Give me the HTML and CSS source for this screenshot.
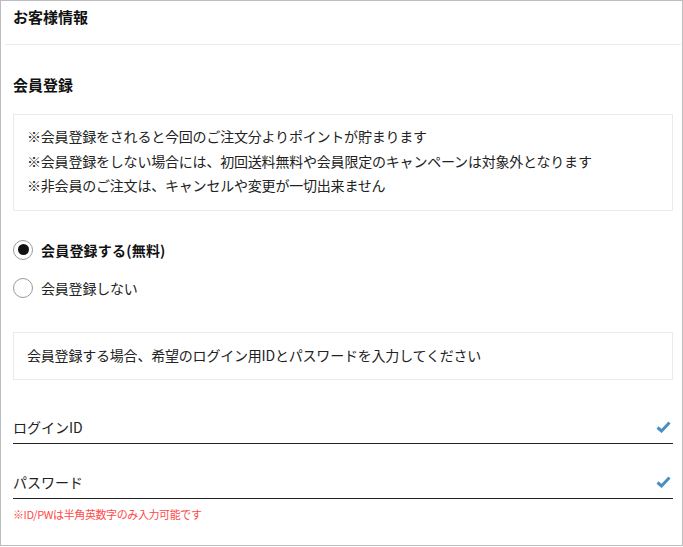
FILE: index.html
```html
<!DOCTYPE html>
<html lang="ja">
<head>
    <meta charset="utf-8">
    <meta name="viewport" content="width=device-width, initial-scale=1">
    <title>お客様情報</title>
    <link rel="stylesheet" href="styles.css">
</head>
<body>
    <div class="panel">
        <div class="panel-header">
            <h1>お客様情報</h1>
        </div>

        <div class="panel-body">
            <h2>会員登録</h2>

            <div class="note-box">
                <p>※会員登録をされると今回のご注文分よりポイントが貯まります</p>
                <p>※会員登録をしない場合には、初回送料無料や会員限定のキャンペーンは対象外となります</p>
                <p>※非会員のご注文は、キャンセルや変更が一切出来ません</p>
            </div>

            <div class="radio-group">
                <label class="radio checked">
                    <span class="radio-mark"></span>
                    <span class="radio-label">会員登録する(無料)</span>
                </label>
                <label class="radio">
                    <span class="radio-mark"></span>
                    <span class="radio-label">会員登録しない</span>
                </label>
            </div>

            <div class="note-box single">
                <p>会員登録する場合、希望のログイン用IDとパスワードを入力してください</p>
            </div>

            <div class="field login">
                <span class="field-label">ログインID</span>
                <svg class="check" width="15" height="12" viewBox="0 0 15 12">
                    <path d="M1.5 6.5 L5.5 10 L13.5 1.5" fill="none" stroke="#4a8fc0" stroke-width="3"/>
                </svg>
            </div>

            <div class="field password">
                <span class="field-label">パスワード</span>
                <svg class="check" width="15" height="12" viewBox="0 0 15 12">
                    <path d="M1.5 6.5 L5.5 10 L13.5 1.5" fill="none" stroke="#4a8fc0" stroke-width="3"/>
                </svg>
            </div>
            <p class="field-note">※ID/PWは半角英数字のみ入力可能です</p>
        </div>
    </div>
</body>
</html>
```

FILE: styles.css
```css
body {
    margin: 0;
    font-family: "Noto Sans CJK JP", "Noto Sans", sans-serif;
    color: #222;
    background: #fff;
}
.panel {
    width: 683px;
    height: 546px;
    box-sizing: border-box;
    border: 1px solid #bdbdbd;
}
.panel-header {
    height: 43px;
    margin: 0 1px 0 4px;
    padding-left: 8px;
    border-bottom: 1px solid #ebebeb;
}
.panel-header h1 {
    margin: 0;
    padding-top: 6px;
    font-size: 15px;
    line-height: 20px;
    font-weight: bold;
    color: #111;
}
.panel-body {
    padding: 0 9px 0 12px;
}
.panel-body h2 {
    margin: 30px 0 19px;
    font-size: 15px;
    line-height: 20px;
    font-weight: bold;
    color: #111;
}
.note-box {
    border: 1px solid #ebebeb;
    padding: 9px 13px 12px;
}
.note-box p {
    margin: 0;
    font-size: 14px;
    line-height: 24.5px;
    letter-spacing: -0.2px;
}
.note-box.single {
    margin-top: 25px;
    padding: 10px 13px 12px;
}
.note-box.single p {
    line-height: 24px;
}
.radio-group {
    margin-top: 20px;
}
.radio {
    display: flex;
    align-items: center;
    height: 38px;
    line-height: 20px;
}
.radio-mark {
    flex: none;
    width: 18px;
    height: 18px;
    border: 1.5px solid #9a9a9a;
    border-radius: 50%;
    display: flex;
    align-items: center;
    justify-content: center;
    margin-right: 8px;
}
.radio.checked .radio-mark::after {
    content: '';
    width: 11px;
    height: 11px;
    border-radius: 50%;
    background: #111;
}
.radio-label {
    font-size: 14px;
    letter-spacing: -0.2px;
}
.radio.checked .radio-label {
    font-weight: bold;
    letter-spacing: 0.2px;
    color: #111;
}
.field {
    display: flex;
    justify-content: space-between;
    align-items: center;
    padding-bottom: 4px;
    border-bottom: 1px solid #222;
}
.field.login {
    margin-top: 35px;
}
.field.password {
    margin-top: 26px;
}
.field-label {
    font-size: 14px;
    line-height: 24px;
}
.check {
    margin-right: 2px;
}
.field-note {
    margin: 7px 0 0;
    font-size: 11px;
    line-height: 16px;
    letter-spacing: -0.4px;
    color: #ff4a4a;
}
```
